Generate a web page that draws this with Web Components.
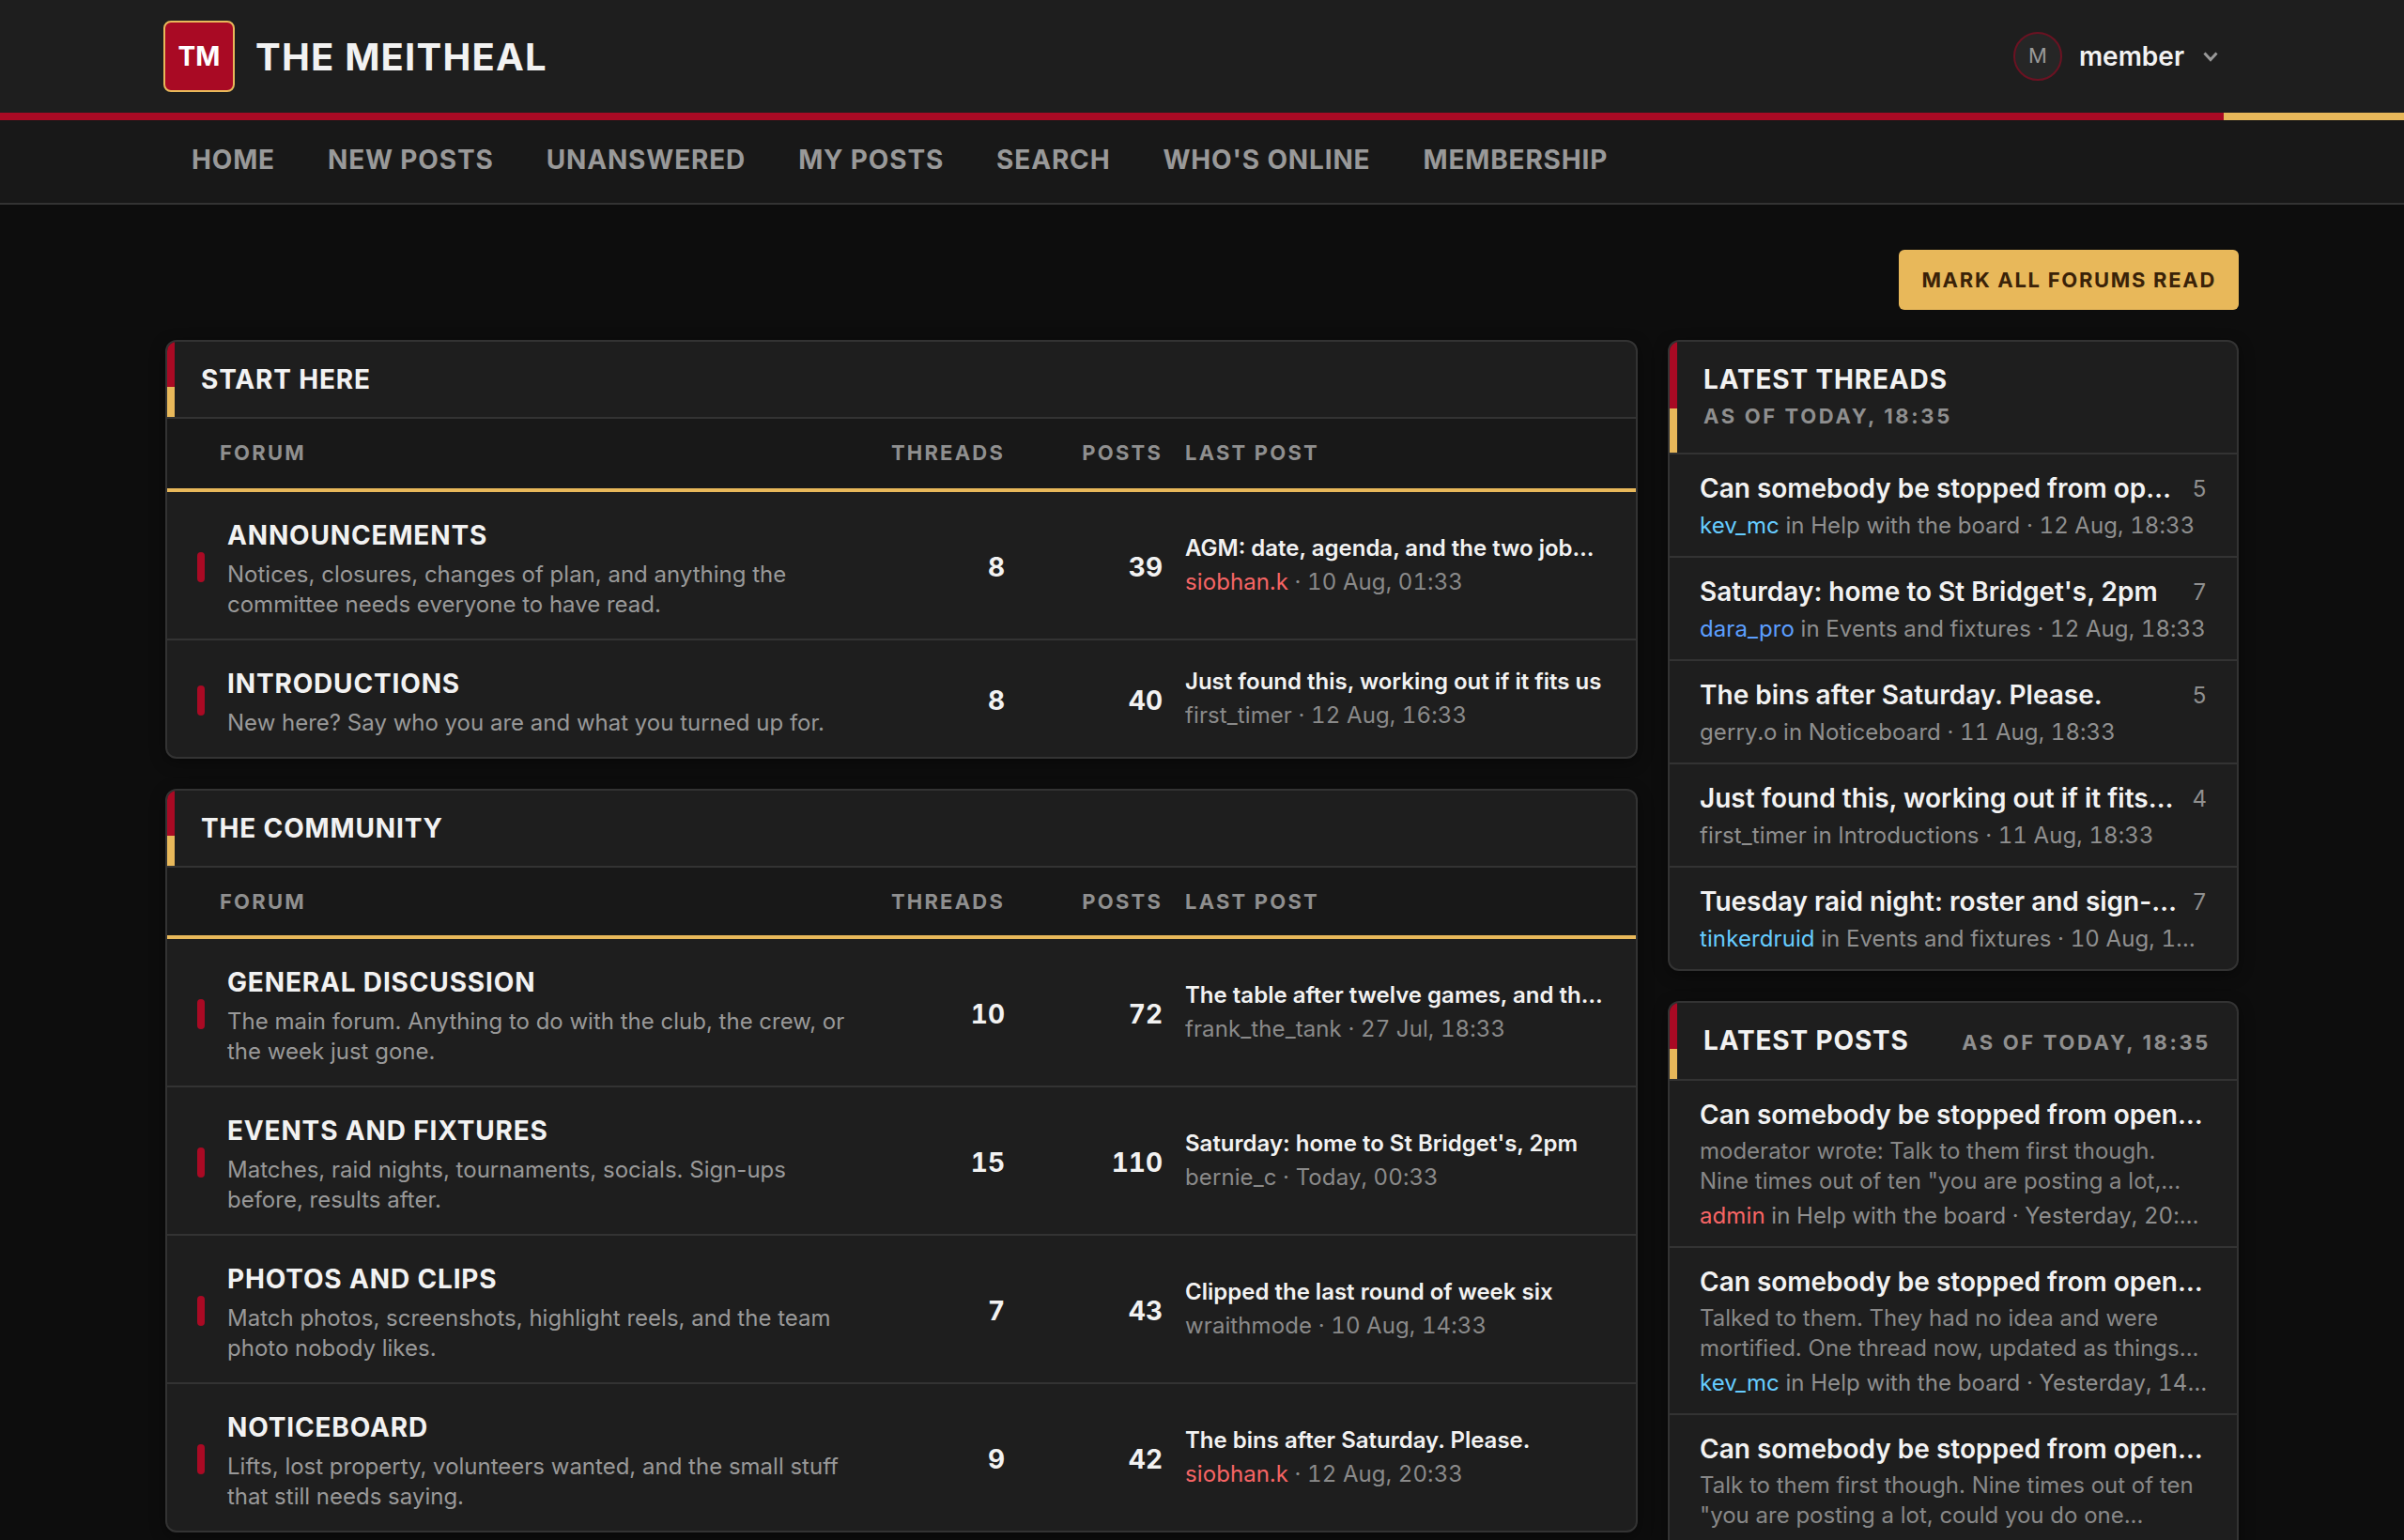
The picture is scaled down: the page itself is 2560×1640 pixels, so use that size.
<!DOCTYPE html>
<html lang="en">
<head>
<meta charset="utf-8">
<title>The Meitheal</title>
<style>
  html, body { height: 100%; overflow: hidden; }
  body {
    margin: 0;
    background: #0d0d0d;
    color: #f0f0f0;
    font-family: Inter, "Liberation Sans", sans-serif;
  }
</style>
</head>
<body>
<site-header></site-header>
<site-nav items="Home,New posts,Unanswered,My posts,Search,Who's online,Membership"></site-nav>
<page-wrap>
  <mark-button slot="action">Mark all forums read</mark-button>

  <forum-section slot="main" title="Start here" style="--cols-extra: 2px">
    <forum-row name="Announcements" threads="8" posts="39" last="AGM: date, agenda, and the two jobs going this year" who="siobhan.k" role="admin" when="10 Aug, 01:33">Notices, closures, changes of plan, and anything the committee needs everyone to have read.</forum-row>
    <forum-row name="Introductions" threads="8" posts="40" last="Just found this, working out if it fits us" who="first_timer" when="12 Aug, 16:33">New here? Say who you are and what you turned up for.</forum-row>
  </forum-section>

  <forum-section slot="main" title="The community">
    <forum-row name="General discussion" threads="10" posts="72" last="The table after twelve games, and the run in ahead" who="frank_the_tank" when="27 Jul, 18:33">The main forum. Anything to do with the club, the crew, or the week just gone.</forum-row>
    <forum-row name="Events and fixtures" threads="15" posts="110" last="Saturday: home to St Bridget's, 2pm" who="bernie_c" when="Today, 00:33">Matches, raid nights, tournaments, socials. Sign-ups before, results after.</forum-row>
    <forum-row name="Photos and clips" threads="7" posts="43" last="Clipped the last round of week six" who="wraithmode" when="10 Aug, 14:33">Match photos, screenshots, highlight reels, and the team photo nobody likes.</forum-row>
    <forum-row name="Noticeboard" threads="9" posts="42" last="The bins after Saturday. Please." who="siobhan.k" role="admin" when="12 Aug, 20:33">Lifts, lost property, volunteers wanted, and the small stuff that still needs saying.</forum-row>
  </forum-section>

  <side-panel slot="side" title="Latest threads" sub="As of today, 18:35">
    <thread-item title="Can somebody be stopped from opening a new thread every day" count="5" who="kev_mc" role="mod" where="Help with the board" when="12 Aug, 18:33"></thread-item>
    <thread-item title="Saturday: home to St Bridget's, 2pm" count="7" who="dara_pro" role="pro" where="Events and fixtures" when="12 Aug, 18:33"></thread-item>
    <thread-item title="The bins after Saturday. Please." count="5" who="gerry.o" where="Noticeboard" when="11 Aug, 18:33"></thread-item>
    <thread-item title="Just found this, working out if it fits us" count="4" who="first_timer" where="Introductions" when="11 Aug, 18:33"></thread-item>
    <thread-item title="Tuesday raid night: roster and sign-ups" count="7" who="tinkerdruid" role="mod" where="Events and fixtures" when="10 Aug, 18:33"></thread-item>
  </side-panel>

  <side-panel slot="side" title="Latest posts" sub="As of today, 18:35">
    <post-item title="Can somebody be stopped from opening a new thread every day" who="admin" role="admin" where="Help with the board" when="Yesterday, 20:33">moderator wrote: Talk to them first though. Nine times out of ten "you are posting a lot,...</post-item>
    <post-item title="Can somebody be stopped from opening a new thread every day" who="kev_mc" role="mod" where="Help with the board" when="Yesterday, 14:33">Talked to them. They had no idea and were mortified. One thread now, updated as things...</post-item>
    <post-item title="Can somebody be stopped from opening a new thread every day" who="gerry.o" where="Help with the board" when="Yesterday, 09:33">Talk to them first though. Nine times out of ten "you are posting a lot, could you do one...</post-item>
  </side-panel>
</page-wrap>

<script>
// names get their colour from the role
const roleColors = { admin: "#f76565", mod: "#66ccff", pro: "#5c9eff" };
function whoSpan(who, role) {
  const color = roleColors[role];
  return `<span${color ? ` style="color:${color}"` : ""}>${who}</span>`;
}

class SiteHeader extends HTMLElement {
  connectedCallback() {
    this.attachShadow({ mode: "open" }).innerHTML = `
    <style>
      :host { display: block; background: #1e1e1e; }
      .top {
        height: 120px; box-sizing: border-box; padding: 0 176px 0 174px;
        display: flex; align-items: center; justify-content: space-between;
      }
      .brand { display: flex; align-items: center; gap: 22px; }
      .logo {
        width: 76px; height: 76px; box-sizing: border-box;
        border: 2px solid #e8b85a; border-radius: 8px; background: #a90a24;
        color: #fff; font-weight: 700; font-size: 28px;
        display: flex; align-items: center; justify-content: center;
      }
      .name { font-size: 40px; font-weight: 700; color: #f2f2f2; letter-spacing: 1.2px; }
      .user { display: flex; align-items: center; padding-right: 22px; }
      .avatar {
        width: 52px; height: 52px; box-sizing: border-box; border-radius: 50%; padding-bottom: 2px;
        border: 2px solid #6b1222; background: #262626; color: #999;
        font-size: 22px; display: flex; align-items: center; justify-content: center;
      }
      .uname { margin-left: 18px; font-size: 28px; font-weight: 600; color: #f2f2f2; }
      svg { margin-left: 20px; display: block; }
      .rule { height: 8px; background: linear-gradient(90deg, #a90a24 2368px, #e8b85a 2368px); }
    </style>
    <div class="top">
      <div class="brand"><div class="logo">TM</div><div class="name">THE MEITHEAL</div></div>
      <div class="user">
        <div class="avatar">M</div>
        <div class="uname">member</div>
        <svg width="16" height="11" viewBox="0 0 16 11" fill="none" stroke="#999" stroke-width="3"><path d="M1.5 1.5 8 8.5l6.5-7"/></svg>
      </div>
    </div>
    <div class="rule"></div>`;
  }
}

class SiteNav extends HTMLElement {
  connectedCallback() {
    const items = this.getAttribute("items").split(",");
    this.attachShadow({ mode: "open" }).innerHTML = `
    <style>
      :host {
        display: flex; height: 88px; padding: 0 176px; background: #181818;
        border-bottom: 2px solid #333;
      }
      a {
        display: flex; align-items: center; padding: 0 28px 4px;
        font-size: 28px; font-weight: 700; color: #999; letter-spacing: .84px; text-transform: uppercase;
      }
    </style>
    ${items.map((item) => `<a>${item}</a>`).join("")}`;
  }
}

class PageWrap extends HTMLElement {
  connectedCallback() {
    this.attachShadow({ mode: "open" }).innerHTML = `
    <style>
      :host { display: block; padding: 48px 176px; }
      .actions { display: flex; justify-content: flex-end; margin-bottom: 32px; }
      .cols { display: grid; grid-template-columns: 1568px 608px; gap: 32px; align-items: start; }
      .col { display: flex; flex-direction: column; gap: 32px; min-width: 0; }
    </style>
    <div class="actions"><slot name="action"></slot></div>
    <div class="cols">
      <div class="col"><slot name="main"></slot></div>
      <div class="col"><slot name="side"></slot></div>
    </div>`;
  }
}

class MarkButton extends HTMLElement {
  connectedCallback() {
    this.attachShadow({ mode: "open" }).innerHTML = `
    <style>
      :host {
        display: flex; align-items: center; height: 64px; padding: 0 24px;
        background: #e8b85a; color: #3a2208; border-radius: 6px;
        font-size: 22px; font-weight: 700; letter-spacing: 1.7px; text-transform: uppercase;
      }
    </style>
    <slot></slot>`;
  }
}

// shared look of the panel box and its heading
const panelStyles = `
  :host {
    display: block; background: #1e1e1e; border: 2px solid #333; border-radius: 12px;
    overflow: hidden; box-shadow: 0 4px 16px rgba(0,0,0,.4);
  }
  .head {
    display: flex; flex-wrap: wrap; column-gap: 24px; justify-content: space-between; align-items: baseline;
    padding: 20px 28px 20px 36px;
    background: linear-gradient(#a90a24 60%, #e8b85a 60%) left top / 8px 100% no-repeat;
    border-bottom: 2px solid #333;
  }
  .title { font-size: 28px; line-height: 40px; font-weight: 700; color: #f2f2f2; letter-spacing: .84px; text-transform: uppercase; }
  .sub { padding-top: 1px; font-size: 22px; line-height: 37px; font-weight: 700; color: #8f8f8f; letter-spacing: 2.64px; text-transform: uppercase; }
`;

class ForumSection extends HTMLElement {
  connectedCallback() {
    this.attachShadow({ mode: "open" }).innerHTML = `
    <style>
      ${panelStyles}
      .cols {
        display: grid; grid-template-columns: 753px 139px 168px 1fr; align-items: center;
        height: 72px; padding-bottom: var(--cols-extra, 0); background: #181818; border-bottom: 4px solid #e8b85a;
        font-size: 22px; font-weight: 700; color: #8f8f8f; letter-spacing: 2.2px;
      }
      .cols div:nth-child(1) { padding-left: 56px; }
      .cols div:nth-child(2), .cols div:nth-child(3) { text-align: right; }
      .cols div:nth-child(4) { padding-left: 24px; }
      ::slotted(forum-row:not(:last-child)) { border-bottom: 2px solid #333; }
    </style>
    <div class="head"><div class="title">${this.getAttribute("title")}</div></div>
    <div class="cols"><div>FORUM</div><div>THREADS</div><div>POSTS</div><div>LAST POST</div></div>
    <slot></slot>`;
  }
}

class ForumRow extends HTMLElement {
  connectedCallback() {
    const attr = (name) => this.getAttribute(name);
    this.attachShadow({ mode: "open" }).innerHTML = `
    <style>
      :host { display: grid; grid-template-columns: 753px 139px 168px minmax(0, 1fr); align-items: center; }
      .forum { display: flex; align-items: center; padding: 0 19px 0 32px; gap: 24px; }
      .bar { flex: none; width: 8px; height: 32px; margin-top: 4px; border-radius: 4px; background: #a90a24; }
      .text { padding: 27px 0 20px; min-width: 0; }
      .name { font-size: 28px; line-height: 38px; font-weight: 700; color: #f2f2f2; letter-spacing: .84px; text-transform: uppercase; }
      .desc { margin-top: 7px; font-size: 24px; line-height: 32px; color: #999; }
      .num { text-align: right; padding-top: 3px; font-size: 28px; font-weight: 700; color: #f2f2f2; font-variant-numeric: tabular-nums; }
      .last { padding: 0 32px 0 24px; min-width: 0; }
      .last div { white-space: nowrap; overflow: hidden; text-overflow: ellipsis; line-height: 36px; }
      .ltitle { font-size: 24px; font-weight: 600; color: #f2f2f2; }
      .meta { font-size: 24px; color: #8a8a8a; letter-spacing: .1px; font-variant-numeric: tabular-nums; }
    </style>
    <div class="forum">
      <div class="bar"></div>
      <div class="text"><div class="name">${attr("name")}</div><div class="desc"><slot></slot></div></div>
    </div>
    <div class="num">${attr("threads")}</div>
    <div class="num">${attr("posts")}</div>
    <div class="last">
      <div class="ltitle">${attr("last")}</div>
      <div class="meta">${whoSpan(attr("who"), attr("role"))} · ${attr("when")}</div>
    </div>`;
  }
}

class SidePanel extends HTMLElement {
  connectedCallback() {
    this.attachShadow({ mode: "open" }).innerHTML = `
    <style>
      ${panelStyles}
      ::slotted(*:not(:last-child)) { border-bottom: 2px solid #333; }
    </style>
    <div class="head">
      <div class="title">${this.getAttribute("title")}</div>
      <div class="sub">${this.getAttribute("sub")}</div>
    </div>
    <slot></slot>`;
  }
}

const itemStyles = `
  .line { white-space: nowrap; overflow: hidden; text-overflow: ellipsis; }
  .title { font-size: 28px; line-height: 40px; font-weight: 600; color: #f2f2f2; }
  .meta { font-size: 24px; line-height: 36px; margin-top: 2px; color: #8f8f8f; letter-spacing: .1px; font-variant-numeric: tabular-nums; }
`;

class ThreadItem extends HTMLElement {
  connectedCallback() {
    const attr = (name) => this.getAttribute(name);
    this.attachShadow({ mode: "open" }).innerHTML = `
    <style>
      ${itemStyles}
      :host { display: block; padding: 16px 32px 14px; }
      .top { display: flex; align-items: center; gap: 16px; }
      .top .title { flex: 1; min-width: 0; }
      .count { font-size: 24px; color: #8f8f8f; font-variant-numeric: tabular-nums; }
    </style>
    <div class="top"><div class="title line">${attr("title")}</div><div class="count">${attr("count")}</div></div>
    <div class="meta line">${whoSpan(attr("who"), attr("role"))} in ${attr("where")} · ${attr("when")}</div>`;
  }
}

class PostItem extends HTMLElement {
  connectedCallback() {
    const attr = (name) => this.getAttribute(name);
    this.attachShadow({ mode: "open" }).innerHTML = `
    <style>
      ${itemStyles}
      :host { display: block; padding: 16px 32px 14px; }
      .excerpt { margin-top: 3px; font-size: 24px; line-height: 32px; color: #888; }
      .meta { margin-top: 3px; margin-right: -2px; }
    </style>
    <div class="title line">${attr("title")}</div>
    <div class="excerpt"><slot></slot></div>
    <div class="meta line">${whoSpan(attr("who"), attr("role"))} in ${attr("where")} · ${attr("when")}</div>`;
  }
}

customElements.define("site-header", SiteHeader);
customElements.define("site-nav", SiteNav);
customElements.define("page-wrap", PageWrap);
customElements.define("mark-button", MarkButton);
customElements.define("forum-section", ForumSection);
customElements.define("forum-row", ForumRow);
customElements.define("side-panel", SidePanel);
customElements.define("thread-item", ThreadItem);
customElements.define("post-item", PostItem);
</script>
</body>
</html>
